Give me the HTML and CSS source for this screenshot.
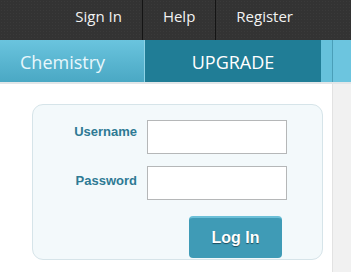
FILE: index.html
```html
<!DOCTYPE html>
<html>
<head>
<meta charset="utf-8">
<link rel="stylesheet" href="styles.css">
</head>
<body>
<header class="topbar">
  <ul class="toplinks">
    <li class="toplink">Sign In</li>
    <li class="toplink sep">Help</li>
    <li class="toplink sep">Register</li>
  </ul>
</header>
<nav class="navbar">
  <div class="tab tab-subject">Chemistry</div>
  <div class="tab tab-upgrade">UPGRADE</div>
  <div class="tab tab-rest"></div>
</nav>
<div class="page">
  <main class="content">
    <form class="loginbox">
      <label class="label label-user">Username</label>
      <input class="field" type="text">
      <label class="label label-pass">Password</label>
      <input class="field" type="password">
      <button class="btn" type="button">Log In</button>
    </form>
  </main>
  <aside class="sidebar"></aside>
</div>
</body>
</html>
```
FILE: styles.css
```css
html, body {
  margin: 0;
  padding: 0;
  background: #ffffff;
  height: 100%;
  overflow: hidden;
}
body {
  font-family: "Liberation Sans", Arial, sans-serif;
}
.topbar {
  height: 40px;
  background-color: #333333;
  background-image: radial-gradient(#3a3a3a 1px, transparent 1px);
  background-size: 3px 3px;
  display: flex;
  justify-content: flex-end;
  padding-right: 38px;
}
.toplinks {
  list-style: none;
  margin: 0;
  padding: 0;
  display: flex;
}
.toplink {
  font-family: "Open Sans", "Noto Sans", sans-serif;
  font-size: 15px;
  color: #f2f2f2;
  line-height: 32px;
  padding: 0 20px 8px 20px;
}
.toplink.sep {
  border-left: 1px solid #141414;
}
.navbar {
  height: 42px;
  display: flex;
  border-bottom: 2px solid #e2e6e8;
}
.tab {
  font-family: "Open Sans", "Noto Sans", sans-serif;
  font-size: 18px;
  color: #ffffff;
  line-height: 44px;
  height: 42px;
}
.tab-subject {
  width: 124px;
  padding-left: 20px;
  background: linear-gradient(#6ac4de, #4aa8c4);
  border-right: 1px solid #8ed3e6;
  color: #e8f7fc;
}
.tab-upgrade {
  width: 176px;
  text-align: center;
  background: #207d96;
}
.tab-rest {
  flex: 1;
  background: linear-gradient(90deg, #66c1db 0, #66c1db 11px, #4a9fb8 11px, #4a9fb8 12px, #6cc5df 12px);
}
.page {
  display: flex;
  height: 188px;
}
.content {
  width: 332px;
  padding: 20px 0 0 32px;
  box-sizing: border-box;
}
.sidebar {
  flex: 1;
  background: #f1f1f1;
  border-left: 1px solid #e2e2e2;
}
.loginbox {
  width: 291px;
  height: 156px;
  box-sizing: border-box;
  background: #f3f9fb;
  border: 1px solid #d6e4e9;
  border-radius: 11px;
  display: grid;
  grid-template-columns: 104px 140px;
  column-gap: 10px;
  row-gap: 11px;
  padding-top: 15px;
  align-items: start;
}
.label {
  font-weight: bold;
  font-size: 13px;
  line-height: 16px;
  color: #2e7a94;
  text-align: right;
}
.label-user {
  padding-top: 4px;
}
.label-pass {
  padding-top: 7px;
}
.field {
  width: 140px;
  height: 34px;
  box-sizing: border-box;
  margin: 0;
  border: 1px solid #b5b7b8;
  background: #ffffff;
}
.btn {
  grid-column: 2;
  margin: 5px 0 0 42px;
  width: 93px;
  height: 42px;
  border: none;
  border-top: 2px solid #6cc0d8;
  border-radius: 4px;
  background: #3f9bb6;
  color: #ffffff;
  font-family: "Liberation Sans", Arial, sans-serif;
  font-weight: bold;
  font-size: 16px;
  text-shadow: 0 1px 1px #1d4d5c;
  padding: 0;
}
```
